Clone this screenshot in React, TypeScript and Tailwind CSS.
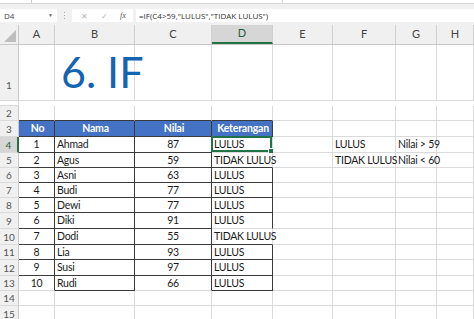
import React from "react";

const cols = "grid grid-cols-[19px_36px_80px_77px_61px_60px_63px_41px_1fr]";

type Cell = {
  text?: string;
  align?: "l" | "c";
  r?: boolean;
  b?: boolean;
  head?: boolean;
  sel?: boolean;
};

const data: [number, string, number, string][] = [
  [1, "Ahmad", 87, "LULUS"],
  [2, "Agus", 59, "TIDAK LULUS"],
  [3, "Asni", 63, "LULUS"],
  [4, "Budi", 77, "LULUS"],
  [5, "Dewi", 77, "LULUS"],
  [6, "Diki", 91, "LULUS"],
  [7, "Dodi", 55, "TIDAK LULUS"],
  [8, "Lia", 93, "LULUS"],
  [9, "Susi", 97, "LULUS"],
  [10, "Rudi", 66, "LULUS"],
];

const heights = [16, 15, 15, 15, 15, 16, 16, 15, 16, 15, 15, 16];

function CellBox({ c }: { c: Cell }) {
  const rc = c.r ? "border-r-[#3a3a3a]" : "border-r-[#dadada]";
  const bc = c.b ? "border-b-[#3a3a3a]" : "border-b-[#dadada]";
  return (
    <div
      className={`relative flex items-center border-r border-b ${rc} ${bc} ${
        c.head ? "bg-[#4472c4] text-white font-bold justify-center tracking-[-0.2px]" : "text-[#1a1a1a]"
      } ${c.align === "c" ? "justify-center" : "pl-[2px]"}`}
    >
      <span className="whitespace-nowrap leading-none">{c.text}</span>
      {c.sel && (
        <div className="absolute -left-[1px] -top-[1px] right-0 bottom-0 border-2 border-[#217346]">
          <div className="absolute -right-[4px] -bottom-[4px] w-[6px] h-[6px] bg-[#217346] border border-white" />
        </div>
      )}
    </div>
  );
}

function RowHead({ n, sel, tall }: { n: number; sel?: boolean; tall?: boolean }) {
  return (
    <div
      className={`flex justify-center border-b border-b-[#dadada] text-[10px] leading-none tracking-normal ${
        tall ? "items-end pb-[10px]" : "items-center"
      } ${
        sel
          ? "bg-[#d6d6d6] text-[#1e5e3a] border-r-2 border-r-[#217346]"
          : "bg-[#f0f0f0] text-[#555] border-r border-r-[#c8c8c8]"
      }`}
    >
      {n}
    </div>
  );
}

export default function App() {
  const rows: { h: number; cells: Cell[] }[] = [];
  rows.push({
    h: 16,
    cells: [
      { text: "No", head: true, r: true, b: true },
      { text: "Nama", head: true, r: true, b: true },
      { text: "Nilai", head: true, r: true, b: true },
      { text: "Keterangan", head: true, r: true, b: true },
      {},
      {},
      {},
      {},
    ],
  });
  data.forEach((d, i) => {
    const rowNo = i + 4;
    const last = rowNo === 13;
    let dr = true;
    let db = true;
    if (rowNo === 4) {
      dr = false;
      db = false;
    }
    if (rowNo === 5 || rowNo === 10) dr = false;
    if (rowNo === 9) db = false;
    const cells: Cell[] = [
      { text: String(d[0]), align: "c", r: true, b: !last },
      { text: d[1], r: true, b: true },
      { text: String(d[2]), align: "c", r: true, b: !last },
      { text: d[3], r: dr, b: db, sel: rowNo === 4 },
      {},
      rowNo === 4 ? { text: "LULUS" } : rowNo === 5 ? { text: "TIDAK LULUS" } : {},
      rowNo === 4 ? { text: "Nilai > 59" } : rowNo === 5 ? { text: "Nilai < 60" } : {},
      {},
    ];
    rows.push({ h: heights[i], cells });
  });
  rows.push({ h: heights[10], cells: [{}, {}, {}, {}, {}, {}, {}, {}] });
  rows.push({ h: heights[11], cells: [{}, {}, {}, {}, {}, {}, {}, {}] });

  const letters = ["A", "B", "C", "D", "E", "F", "G", "H"];

  return (
    <div className="w-[474px] h-[319px] overflow-hidden bg-white font-['Lato',sans-serif] text-[10.5px] tracking-[-0.25px] text-[#1a1a1a]">
      {/* top strip */}
      <div className="h-[4px] flex border-b border-b-[#d6d6d6]">
        <div className="w-[32px] border-r border-r-[#cfcfcf]" />
        <div className="w-[251px] border-r border-r-[#cfcfcf]" />
      </div>
      {/* formula bar */}
      <div className="h-[21px] bg-[#f1f1f1] flex items-start pt-[5px] font-['Open_Sans',sans-serif] tracking-normal">
        <div className="w-[57px] h-[13px] bg-white flex items-center justify-between pl-[4px] pr-[4px] text-[8px] text-[#444]">
          <span>D4</span>
          <span className="text-[5px] text-[#666]">▼</span>
        </div>
        <div className="w-[15px] h-[13px] flex flex-col items-center justify-center gap-[2px]">
          <div className="w-[1px] h-[1px] bg-[#aaa]" />
          <div className="w-[1px] h-[1px] bg-[#aaa]" />
          <div className="w-[1px] h-[1px] bg-[#aaa]" />
        </div>
        <div className="w-[61px] h-[13px] bg-white flex items-center text-[#b5b5b5] text-[8px]">
          <span className="ml-[9px]">✕</span>
          <span className="ml-[13px]">✓</span>
          <span className="ml-[12px] italic font-['Liberation_Serif',serif] text-[8px] text-[#555]">fx</span>
        </div>
        <div className="w-[3px]" />
        <div className="flex-1 h-[13px] bg-white flex items-center pl-[3px] text-[8px] text-[#333] whitespace-nowrap">
          =IF(C4&gt;59,"LULUS","TIDAK LULUS")
        </div>
      </div>
      {/* column headers */}
      <div className={`${cols} h-[20px] bg-[#f0f0f0] border-b border-b-[#c8c8c8] text-[11px] text-[#444] tracking-normal`}>
        <div className="relative border-r border-r-[#c8c8c8]">
          <div className="absolute right-[2px] bottom-[2px] w-0 h-0 border-l-[12px] border-l-transparent border-b-[12px] border-b-[#bdbdbd]" />
        </div>
        {letters.map((l) => (
          <div
            key={l}
            className={`flex items-center justify-center border-r border-r-[#d0d0d0] ${
              l === "D" ? "bg-[#d6d6d6] text-[#1e5e3a] border-b-2 border-b-[#217346]" : ""
            }`}
          >
            {l}
          </div>
        ))}
      </div>
      {/* row 1 */}
      <div className={`${cols} h-[61px]`}>
        <RowHead n={1} tall />
        <div className="border-r border-b border-r-[#dadada] border-b-[#dadada]" />
        <div className="relative flex items-end border-r border-b border-r-[#dadada] border-b-[#dadada] pl-[6px] pb-[7px]">
          <span className="whitespace-nowrap leading-none text-[43px] tracking-normal text-[#1464b4]">6. IF</span>
        </div>
        {[0, 1, 2, 3, 4, 5, 6].map((k) => (
          <div key={k} className="border-r border-b border-r-[#dadada] border-b-[#dadada]" />
        ))}
      </div>
      {/* row 2 */}
      <div className={`${cols} h-[15px]`}>
        <RowHead n={2} />
        {[0, 1, 2, 3, 4, 5, 6, 7].map((k) => (
          <div
            key={k}
            className={`border-r border-b border-r-[#dadada] ${k < 4 ? "border-b-[#3a3a3a]" : "border-b-[#dadada]"}`}
          />
        ))}
      </div>
      {rows.map((row, i) => (
        <div key={i} className={cols} style={{ height: row.h }}>
          <RowHead n={i + 3} sel={i + 3 === 4} />
          {row.cells.map((c, j) => (
            <CellBox key={j} c={c} />
          ))}
        </div>
      ))}
    </div>
  );
}
